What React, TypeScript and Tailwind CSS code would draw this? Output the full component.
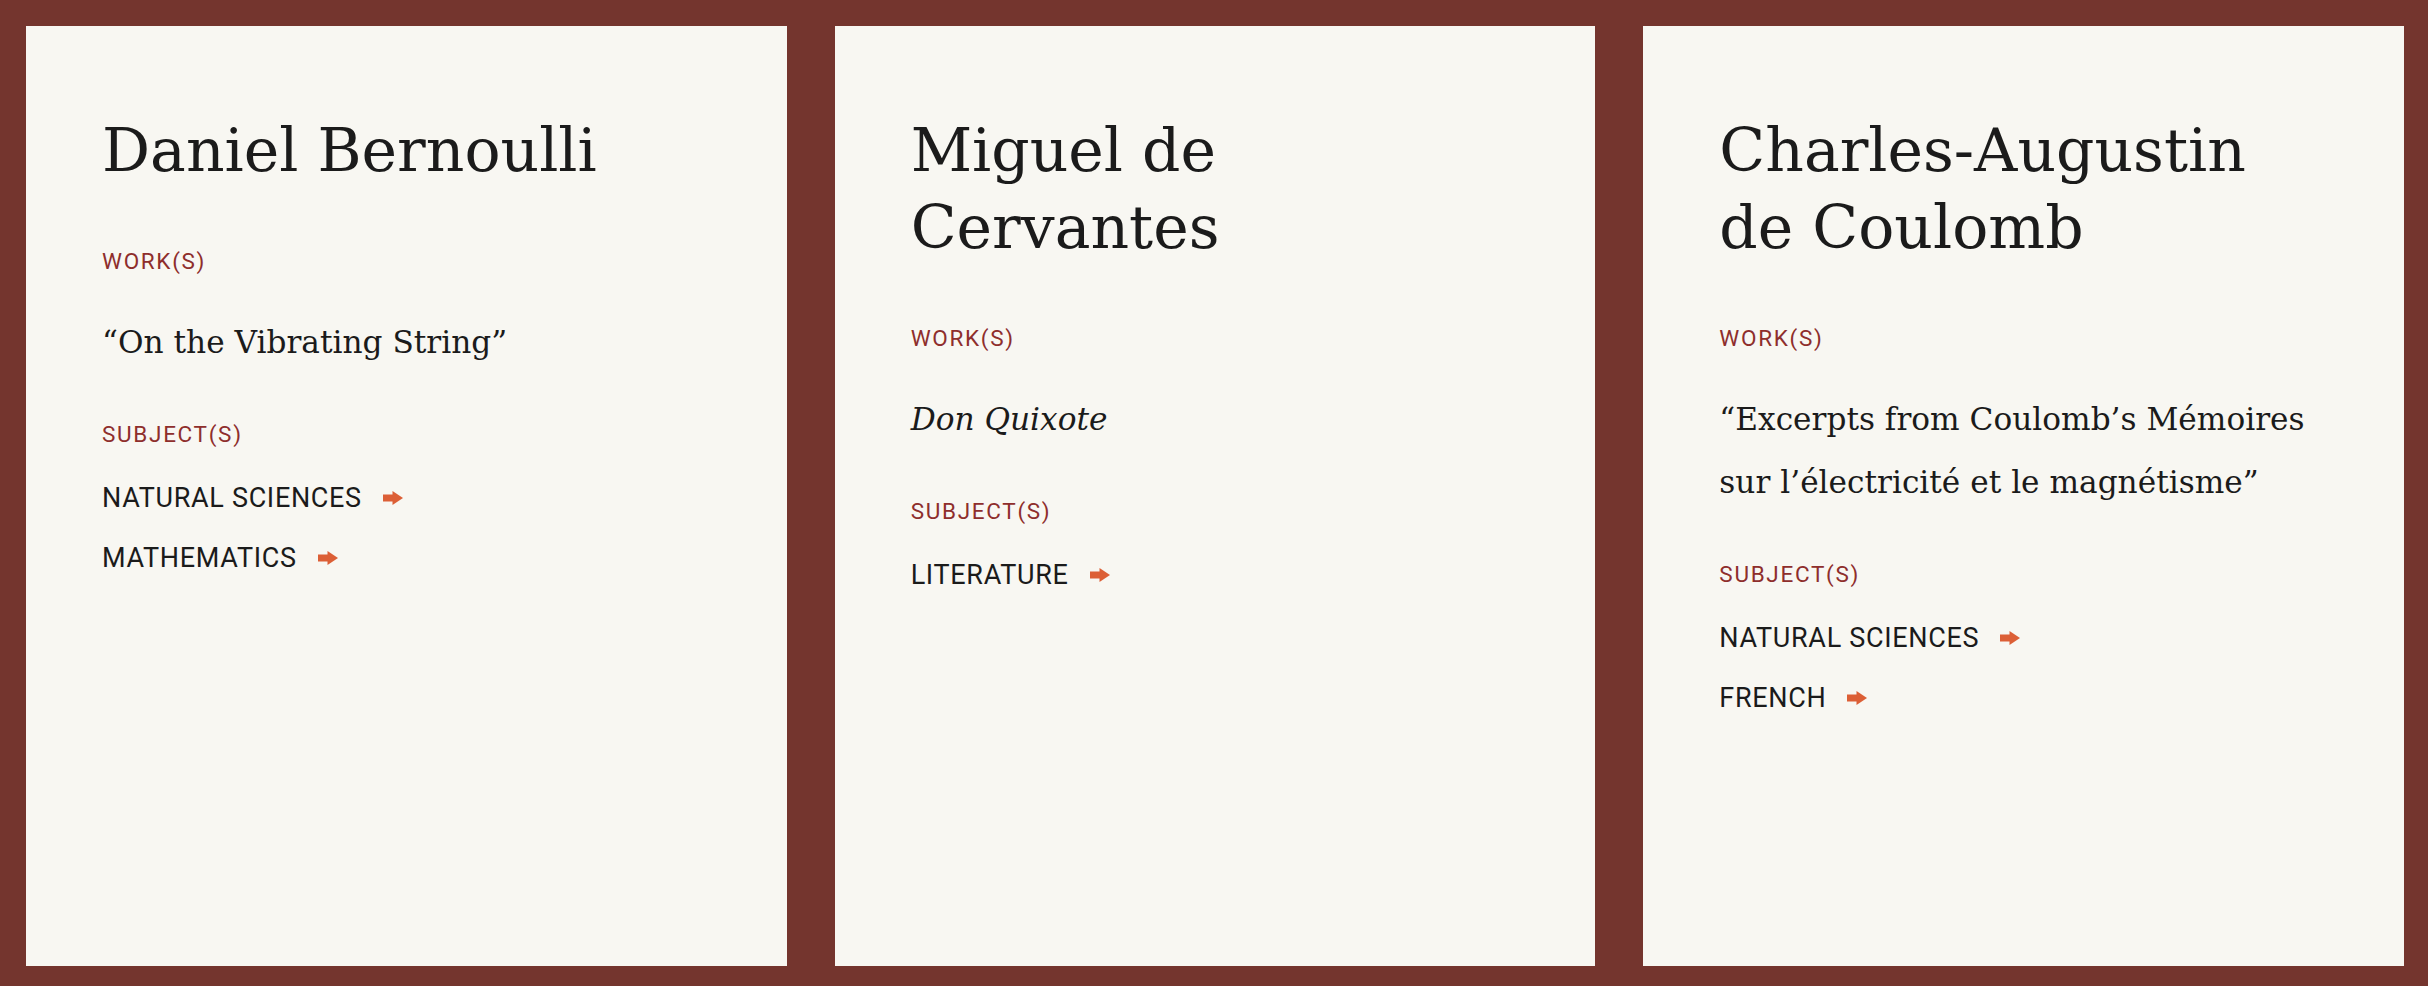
import React from "react";

type Person = {
  name: string[];
  work: React.ReactNode;
  subjects: string[];
};

const people: Person[] = [
  {
    name: ["Daniel Bernoulli"],
    work: <span>“On the Vibrating String”</span>,
    subjects: ["NATURAL SCIENCES", "MATHEMATICS"],
  },
  {
    name: ["Miguel de", "Cervantes"],
    work: <span className="italic">Don Quixote</span>,
    subjects: ["LITERATURE"],
  },
  {
    name: ["Charles-Augustin", "de Coulomb"],
    work: (
      <span>
        “Excerpts from Coulomb’s Mémoires
        <br />
        sur l’électricité et le magnétisme”
      </span>
    ),
    subjects: ["NATURAL SCIENCES", "FRENCH"],
  },
];

function Arrow() {
  return (
    <svg width="20" height="14" viewBox="0 0 20 14" className="shrink-0">
      <rect x="0" y="3.5" width="10.5" height="7" fill="#dc5f36" />
      <polygon points="9.5,0 20,7 9.5,14" fill="#dc5f36" />
    </svg>
  );
}

function Card({ p }: { p: Person }) {
  return (
    <div className="bg-[#f8f7f2] pl-[76px] pr-[40px] pt-[86px] flex flex-col">
      <h2 className="font-['DejaVu_Serif',serif] text-[60px] leading-[77px] text-[#1b1b1b] font-normal">
        {p.name.map((n, i) => (
          <div key={i}>{n}</div>
        ))}
      </h2>
      <div className="mt-[57px] font-['Roboto',sans-serif] text-[22.5px] leading-[30px] tracking-[0.075em] text-[#8e2e2c]">
        WORK(S)
      </div>
      <div className="mt-[35px] font-['DejaVu_Serif',serif] text-[31.2px] leading-[63px] text-[#1b1b1b]">
        {p.work}
      </div>
      <div className="mt-[45px] font-['Roboto',sans-serif] text-[22.5px] leading-[30px] tracking-[0.075em] text-[#8e2e2c]">
        SUBJECT(S)
      </div>
      <ul className="mt-[31px] flex flex-col gap-[24px]">
        {p.subjects.map((s) => (
          <li
            key={s}
            className="flex items-center gap-[21px] font-['Roboto',sans-serif] text-[27px] leading-[36px] tracking-[0.025em] text-[#1b1b1b]"
          >
            <span>{s}</span>
            <Arrow />
          </li>
        ))}
      </ul>
    </div>
  );
}

export default function App() {
  return (
    <div className="w-full h-[986px] bg-[#74352e] pt-[26px] pl-[26px] pr-[24px] pb-[20px] grid grid-cols-3 gap-[48px]">
      {people.map((p, i) => (
        <Card key={i} p={p} />
      ))}
    </div>
  );
}
